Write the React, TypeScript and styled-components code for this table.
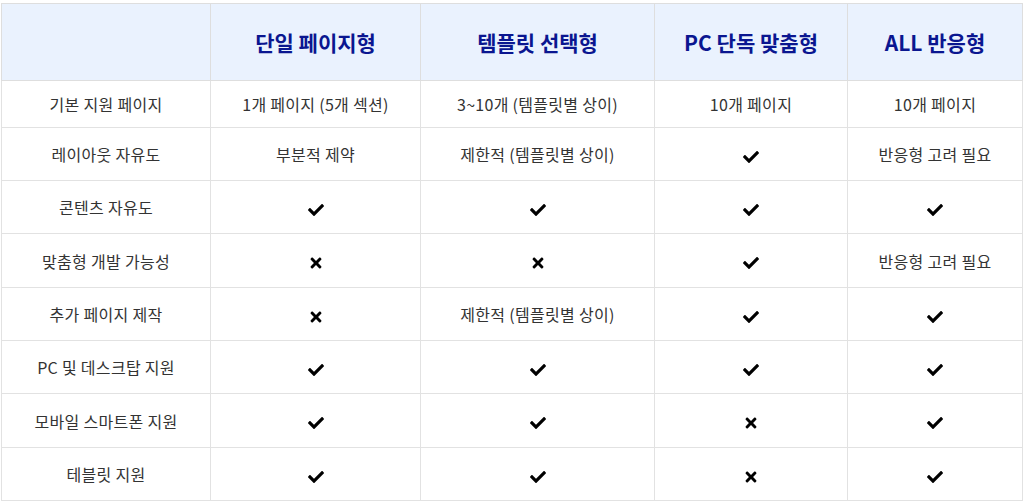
import React from "react";
import styled, { createGlobalStyle } from "styled-components";
import { FaCheck, FaTimes } from "react-icons/fa";

const Global = createGlobalStyle`
  html, body { margin: 0; padding: 0; background: #ffffff; }
  body { font-family: "Noto Sans CJK KR", "Noto Sans", sans-serif; }
`;

const Page = styled.div`
  padding: 3px 3px 0 1px;
`;

const Table = styled.table`
  border-collapse: collapse;
  width: 1021px;
  table-layout: fixed;
  border: 1px solid #dedede;
`;

const HeadCell = styled.th`
  background: #eaf2fe;
  color: #0a1690;
  font-size: 21px;
  font-weight: 700;
  height: 76px;
  padding: 0;
  text-align: center;
  border: 1px solid #dedede;
`;

const Row = styled.tr<{ $h: number }>`
  height: ${(p) => p.$h}px;
`;

const Cell = styled.td`
  color: #333333;
  font-size: 16px;
  letter-spacing: 0.3px;
  font-weight: 400;
  text-align: center;
  vertical-align: middle;
  padding: 0;
  border: 1px solid #e2e2e2;
`;

const Icon = styled.span`
  display: inline-flex;
  align-items: center;
  justify-content: center;
  color: #000;
  vertical-align: middle;
`;

type V = string | "Y" | "N";

const cols = [
  { label: "", w: 209 },
  { label: "단일 페이지형", w: 210 },
  { label: "템플릿 선택형", w: 234 },
  { label: "PC 단독 맞춤형", w: 193 },
  { label: "ALL 반응형", w: 175 },
];

const rows: { name: string; vals: V[]; h: number }[] = [
  { name: "기본 지원 페이지", vals: ["1개 페이지 (5개 섹션)", "3~10개 (템플릿별 상이)", "10개 페이지", "10개 페이지"], h: 47 },
  { name: "레이아웃 자유도", vals: ["부분적 제약", "제한적 (템플릿별 상이)", "Y", "반응형 고려 필요"], h: 53 },
  { name: "콘텐츠 자유도", vals: ["Y", "Y", "Y", "Y"], h: 53 },
  { name: "맞춤형 개발 가능성", vals: ["N", "N", "Y", "반응형 고려 필요"], h: 54 },
  { name: "추가 페이지 제작", vals: ["N", "제한적 (템플릿별 상이)", "Y", "Y"], h: 53 },
  { name: "PC 및 데스크탑 지원", vals: ["Y", "Y", "Y", "Y"], h: 53 },
  { name: "모바일 스마트폰 지원", vals: ["Y", "Y", "N", "Y"], h: 54 },
  { name: "테블릿 지원", vals: ["Y", "Y", "N", "Y"], h: 53 },
];

function Value({ v }: { v: V }) {
  if (v === "Y")
    return (
      <Icon>
        <FaCheck size={16} />
      </Icon>
    );
  if (v === "N")
    return (
      <Icon>
        <FaTimes size={16} />
      </Icon>
    );
  return <>{v}</>;
}

export default function App() {
  return (
    <>
      <Global />
      <Page>
        <Table>
          <colgroup>
            {cols.map((c, i) => (
              <col key={i} style={{ width: c.w }} />
            ))}
          </colgroup>
          <thead>
            <tr>
              {cols.map((c, i) => (
                <HeadCell key={i}>{c.label}</HeadCell>
              ))}
            </tr>
          </thead>
          <tbody>
            {rows.map((r) => (
              <Row key={r.name} $h={r.h}>
                <Cell>{r.name}</Cell>
                {r.vals.map((v, i) => (
                  <Cell key={i}>
                    <Value v={v} />
                  </Cell>
                ))}
              </Row>
            ))}
          </tbody>
        </Table>
      </Page>
    </>
  );
}
